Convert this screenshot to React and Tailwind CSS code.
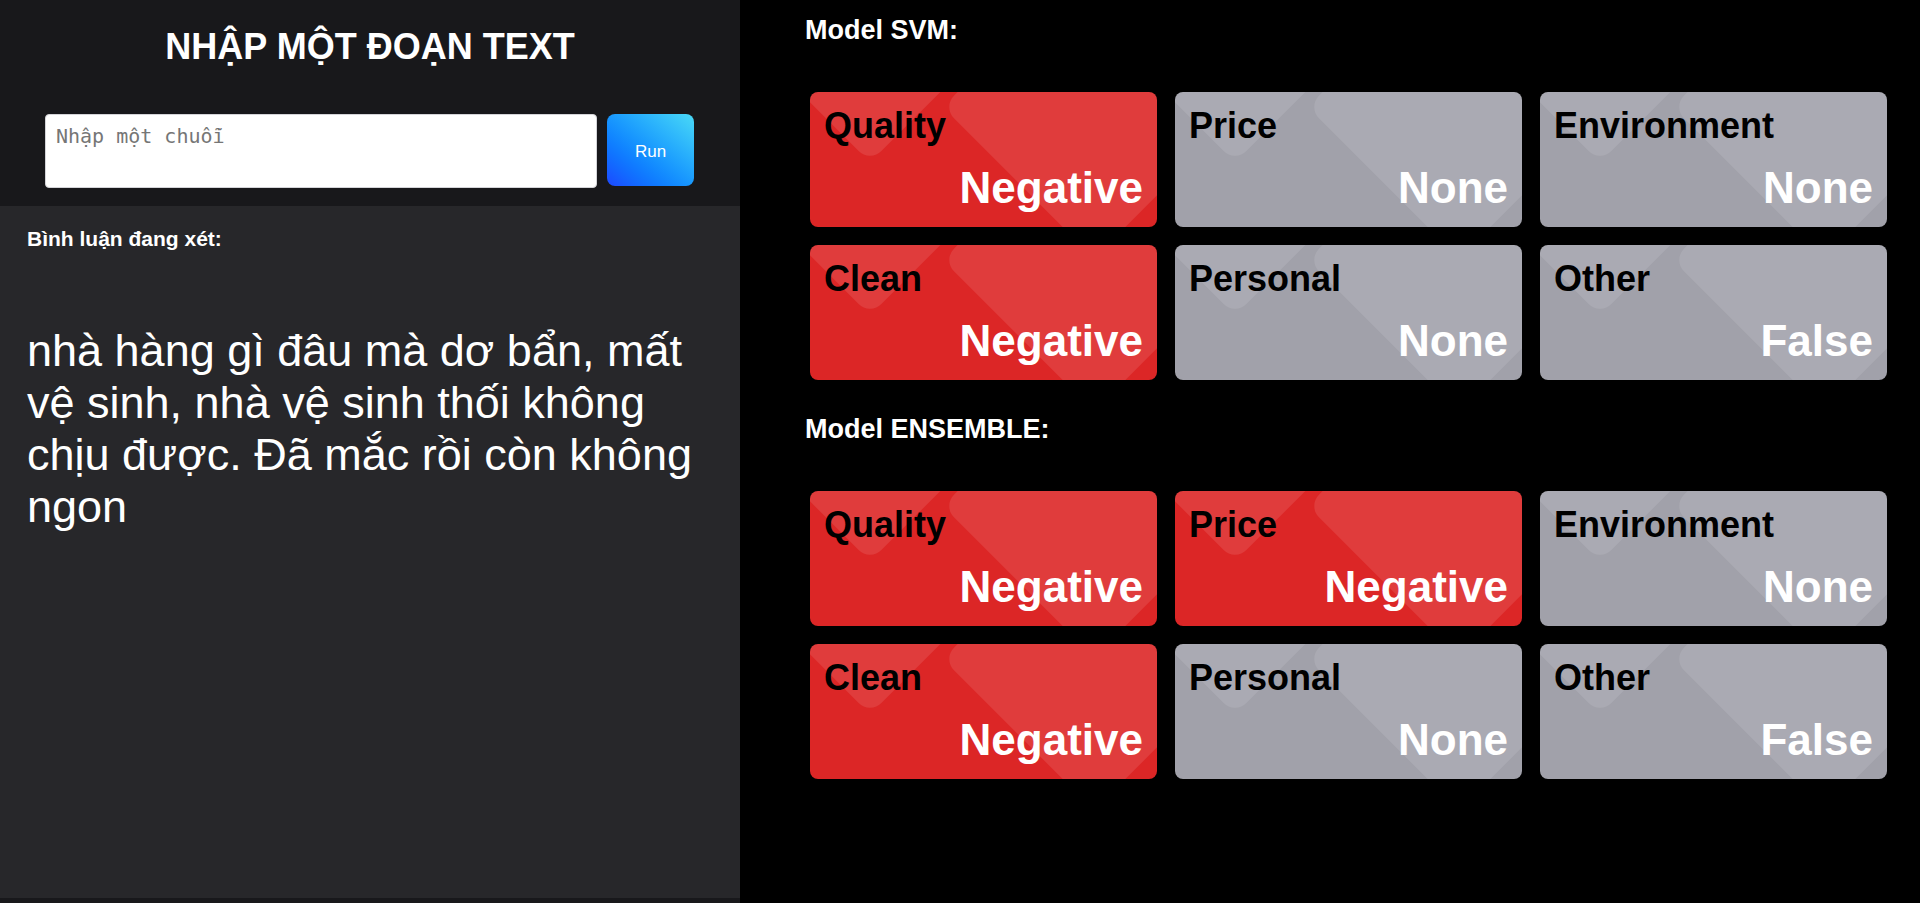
const svmResults = [
  { label: 'Quality', value: 'Negative' },
  { label: 'Price', value: 'None' },
  { label: 'Environment', value: 'None' },
  { label: 'Clean', value: 'Negative' },
  { label: 'Personal', value: 'None' },
  { label: 'Other', value: 'False' },
]

const ensembleResults = [
  { label: 'Quality', value: 'Negative' },
  { label: 'Price', value: 'Negative' },
  { label: 'Environment', value: 'None' },
  { label: 'Clean', value: 'Negative' },
  { label: 'Personal', value: 'None' },
  { label: 'Other', value: 'False' },
]

function AspectCard({ label, value }) {
  const negative = value === 'Negative'
  return (
    <div
      className={`relative h-[135px] overflow-hidden rounded-lg ${
        negative ? 'bg-[#dc2626]' : 'bg-[#a1a1aa]'
      }`}
    >
      {/* decorative diamonds */}
      <div className="absolute left-[-47px] top-[-188px] h-[214px] w-[214px] rotate-45 rounded-2xl bg-white/10" />
      <div className="absolute left-[177px] top-[-92px] h-[214px] w-[214px] rotate-45 rounded-2xl bg-white/10" />
      <div className="relative flex h-full flex-col justify-between px-[14px] pt-[13px] pb-[14px]">
        <div className="text-[36px] font-bold leading-[41px] text-black">{label}</div>
        <div className="text-right text-[44px] font-bold leading-[50px] text-white">{value}</div>
      </div>
    </div>
  )
}

function ModelSection({ title, results, className = '' }) {
  return (
    <section className={className}>
      <h2 className="text-[27px] font-bold leading-[30px] text-white">{title}</h2>
      <div className="mt-[47px] grid grid-cols-3 gap-[18px] px-[5px]">
        {results.map((r) => (
          <AspectCard key={r.label} label={r.label} value={r.value} />
        ))}
      </div>
    </section>
  )
}

export default function App() {
  return (
    <div
      className="flex h-[903px] w-full overflow-hidden bg-black"
      style={{ fontFamily: '"Liberation Sans", Arial, sans-serif' }}
    >
      {/* left column */}
      <div className="flex w-[740px] shrink-0 flex-col bg-[#18181b]">
        <div className="h-[206px] pt-[26px]">
          <h1 className="text-center text-[36px] font-bold leading-[41px] text-white">
            NHẬP MỘT ĐOẠN TEXT
          </h1>
          <div className="mt-[47px] flex items-start pl-[45px]">
            <textarea
              className="h-[74px] w-[552px] resize-none rounded-[4px] border border-[#d4d4d8] bg-white p-[10px] text-[20px] leading-[23px] text-black outline-none placeholder:text-[#767676]"
              style={{ fontFamily: '"DejaVu Sans Mono", monospace' }}
              placeholder="Nhập một chuỗi"
            />
            <button
              type="button"
              className="ml-[10px] h-[72px] w-[87px] rounded-lg bg-gradient-to-tr from-[#1e46ff] to-[#4ad9f6] pt-[4px] text-[17px] text-white"
            >
              Run
            </button>
          </div>
        </div>
        <div className="h-[692px] bg-[#27272a] px-[27px] pt-[21px]">
          <div className="text-[21px] font-bold leading-[24px] text-white">Bình luận đang xét:</div>
          <p className="mt-[74px] text-[45px] leading-[52px] text-white">
            nhà hàng gì đâu mà dơ bẩn, mất vệ sinh, nhà vệ sinh thối không chịu được. Đã mắc rồi còn
            không ngon
          </p>
        </div>
      </div>

      {/* right column */}
      <div className="flex-1 bg-black pl-[65px] pr-[28px] pt-[15px]">
        <ModelSection title="Model SVM:" results={svmResults} />
        <ModelSection title="Model ENSEMBLE:" results={ensembleResults} className="mt-[34px]" />
      </div>
    </div>
  )
}
